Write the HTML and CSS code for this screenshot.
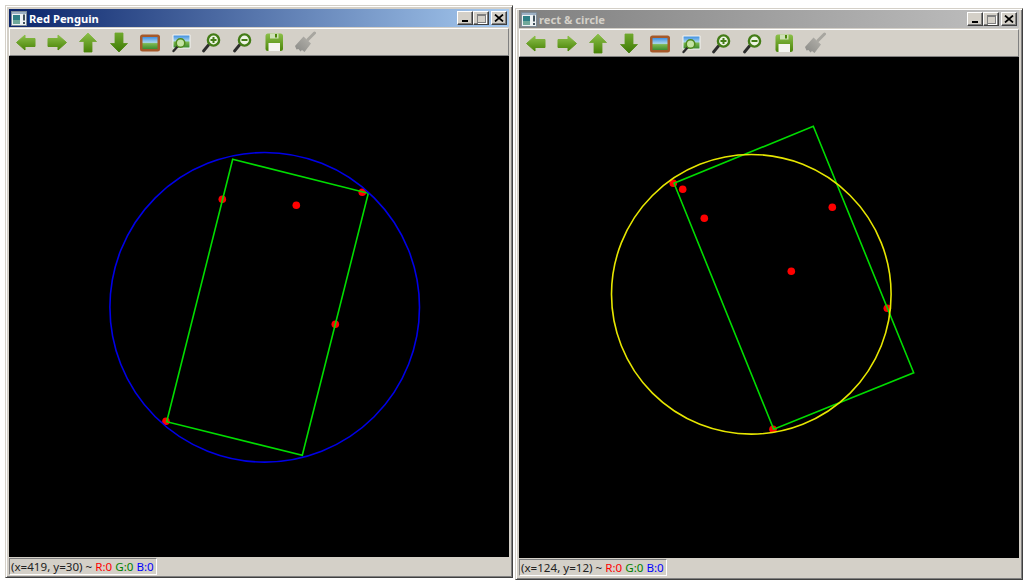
FILE: index.html
```html
<!DOCTYPE html>
<html>
<head>
  <title>Red Penguin</title>
  <link rel="stylesheet" href="styles.css">
</head>
<body>
  <svg class="sprites" width="0" height="0">
    <defs>
      <linearGradient id="greenV" x1="0" y1="0" x2="0" y2="1">
        <stop offset="0" stop-color="#8cc04a"/>
        <stop offset="1" stop-color="#4a8408"/>
      </linearGradient>
      <linearGradient id="greenDown" x1="0" y1="0" x2="0" y2="1">
        <stop offset="0" stop-color="#6fa82c"/>
        <stop offset="1" stop-color="#3f7a06"/>
      </linearGradient>
      <linearGradient id="sky" x1="0" y1="0" x2="0" y2="1">
        <stop offset="0" stop-color="#3f8fe0"/>
        <stop offset="0.45" stop-color="#a8d4ee"/>
        <stop offset="0.55" stop-color="#7cb850"/>
        <stop offset="1" stop-color="#3c8c30"/>
      </linearGradient>
      <linearGradient id="broomGrad" x1="1" y1="0" x2="0" y2="1">
        <stop offset="0" stop-color="#b4b2ac"/>
        <stop offset="1" stop-color="#8a8a86"/>
      </linearGradient>

      <symbol id="ic-left" viewBox="0 0 22 22">
        <path d="M1.5 11.5 L10 4 V7.5 H20 V15.5 H10 V19 Z" fill="url(#greenV)" stroke="url(#greenV)" stroke-linejoin="round"/>
      </symbol>
      <symbol id="ic-right" viewBox="0 0 22 22">
        <path d="M20.5 11.5 L12 4 V7.5 H2 V15.5 H12 V19 Z" fill="url(#greenV)" stroke="url(#greenV)" stroke-linejoin="round"/>
      </symbol>
      <symbol id="ic-up" viewBox="0 0 22 22">
        <path d="M11 2 L19.5 10.5 H15 V21 H7 V10.5 H2.5 Z" fill="url(#greenV)" stroke="url(#greenV)" stroke-width="0.8" stroke-linejoin="round"/>
      </symbol>
      <symbol id="ic-down" viewBox="0 0 22 22">
        <path d="M11 21 L19.5 12.5 H15 V2 H7 V12.5 H2.5 Z" fill="url(#greenDown)" stroke="url(#greenDown)" stroke-width="0.8" stroke-linejoin="round"/>
      </symbol>
      <symbol id="ic-image" viewBox="0 0 22 22">
        <rect x="1" y="3.5" width="20" height="17" rx="2.5" fill="#a5592a"/>
        <rect x="3.5" y="6" width="15" height="12" fill="url(#sky)"/>
      </symbol>
      <symbol id="ic-fit" viewBox="0 0 22 22">
        <rect x="2.5" y="3.5" width="18" height="14" rx="1" fill="#f4f6f4"/>
        <rect x="3.5" y="4.5" width="16" height="12" fill="url(#sky)"/>
        <path d="M3.5 20 L7.5 15.5" stroke="#2c2c2c" stroke-width="2.4" stroke-linecap="round"/>
        <circle cx="10.5" cy="12" r="4.3" fill="#c4e4a4" stroke="#4f8a1c" stroke-width="1.6"/>
      </symbol>
      <symbol id="ic-zoomin" viewBox="0 0 22 22">
        <path d="M2.5 20 L7.5 14" stroke="#2c2c2c" stroke-width="2.8" stroke-linecap="round"/>
        <circle cx="12.5" cy="9" r="5.6" fill="#eef4e4" stroke="#437c16" stroke-width="2.4"/>
        <path d="M9.5 9 H15.5 M12.5 6 V12" stroke="#437c16" stroke-width="2"/>
      </symbol>
      <symbol id="ic-zoomout" viewBox="0 0 22 22">
        <path d="M2.5 20 L7.5 14" stroke="#2c2c2c" stroke-width="2.8" stroke-linecap="round"/>
        <circle cx="12.5" cy="9" r="5.6" fill="#eef4e4" stroke="#437c16" stroke-width="2.4"/>
        <path d="M9.5 9 H15.5" stroke="#437c16" stroke-width="2"/>
      </symbol>
      <symbol id="ic-save" viewBox="0 0 22 22">
        <rect x="2.5" y="2.5" width="17.5" height="17.5" rx="2.5" fill="url(#greenV)"/>
        <rect x="7" y="2.5" width="8.5" height="5" fill="#cfe0b8"/>
        <rect x="12" y="3" width="2" height="3.5" fill="#4a8408"/>
        <rect x="5.5" y="12" width="11.5" height="8" fill="#f4f4f0"/>
      </symbol>
      <symbol id="ic-clear" viewBox="0 0 22 22">
        <path d="M20.5 2 L14 8.5" stroke="#a8a6a0" stroke-width="3" stroke-linecap="round"/>
        <path d="M9.5 5.5 L17 12.5 L10.5 21 L8 19 L6.5 20.5 L4.5 18 L2.5 18.5 L1 15 Z" fill="url(#broomGrad)"/>
      </symbol>
      <symbol id="ic-app" viewBox="0 0 16 15">
        <rect x="0.5" y="0.5" width="15" height="14" fill="#eef2f4" stroke="#7e8c98"/>
        <rect x="1" y="1" width="14" height="2" fill="#9cb0c4"/>
        <rect x="2" y="4" width="7" height="9" fill="#2f7f86"/>
        <rect x="2" y="9" width="7" height="4" fill="#6fa89a"/>
        <rect x="12" y="3.5" width="2" height="6" fill="#40505c"/>
        <rect x="12" y="11" width="2" height="2" fill="#40505c"/>
      </symbol>
      <symbol id="ic-close" viewBox="0 0 10 8">
        <path d="M1 0.5 L9 7.5 M9 0.5 L1 7.5" stroke="#000" stroke-width="1.7"/>
      </symbol>
    </defs>
  </svg>

  <div class="window window-first">
    <div class="titlebar">
      <svg class="app-icon"><use href="#ic-app"/></svg>
      <span class="title">Red Penguin</span>
      <div class="winbuttons">
        <div class="winbtn"><span class="min-glyph"></span></div>
        <div class="winbtn"><span class="max-glyph"></span></div>
        <div class="winbtn close"><svg class="close-glyph"><use href="#ic-close"/></svg></div>
      </div>
    </div>
    <div class="toolbar">
      <div class="tool"><svg><use href="#ic-left"/></svg></div>
      <div class="tool"><svg><use href="#ic-right"/></svg></div>
      <div class="tool"><svg><use href="#ic-up"/></svg></div>
      <div class="tool"><svg><use href="#ic-down"/></svg></div>
      <div class="tool"><svg><use href="#ic-image"/></svg></div>
      <div class="tool"><svg><use href="#ic-fit"/></svg></div>
      <div class="tool"><svg><use href="#ic-zoomin"/></svg></div>
      <div class="tool"><svg><use href="#ic-zoomout"/></svg></div>
      <div class="tool"><svg><use href="#ic-save"/></svg></div>
      <div class="tool"><svg><use href="#ic-clear"/></svg></div>
    </div>
    <svg class="canvas" viewBox="0 0 500 501">
      <g fill="#ff0000">
        <circle cx="213.3" cy="143.3" r="3.8"/>
        <circle cx="287.3" cy="149.3" r="3.8"/>
        <circle cx="353.3" cy="136.3" r="3.8"/>
        <circle cx="326.3" cy="268.3" r="3.8"/>
        <circle cx="157" cy="365.3" r="3.8"/>
      </g>
      <polygon class="rect-line" points="223.7,103.3 359.3,137.3 293.3,399.3 157.7,365.7"/>
      <circle class="blue-line" cx="255.7" cy="251.3" r="154.8"/>
    </svg>
    <div class="statusbar">
      <div class="readout">(x=419, y=30) ~ <span class="r">R:0</span> <span class="g">G:0</span> <span class="b">B:0</span></div>
    </div>
  </div>

  <div class="window window-second">
    <div class="titlebar inactive">
      <svg class="app-icon"><use href="#ic-app"/></svg>
      <span class="title">rect &amp; circle</span>
      <div class="winbuttons">
        <div class="winbtn"><span class="min-glyph"></span></div>
        <div class="winbtn"><span class="max-glyph"></span></div>
        <div class="winbtn close"><svg class="close-glyph"><use href="#ic-close"/></svg></div>
      </div>
    </div>
    <div class="toolbar">
      <div class="tool"><svg><use href="#ic-left"/></svg></div>
      <div class="tool"><svg><use href="#ic-right"/></svg></div>
      <div class="tool"><svg><use href="#ic-up"/></svg></div>
      <div class="tool"><svg><use href="#ic-down"/></svg></div>
      <div class="tool"><svg><use href="#ic-image"/></svg></div>
      <div class="tool"><svg><use href="#ic-fit"/></svg></div>
      <div class="tool"><svg><use href="#ic-zoomin"/></svg></div>
      <div class="tool"><svg><use href="#ic-zoomout"/></svg></div>
      <div class="tool"><svg><use href="#ic-save"/></svg></div>
      <div class="tool"><svg><use href="#ic-clear"/></svg></div>
    </div>
    <svg class="canvas" viewBox="0 0 500 501">
      <g fill="#ff0000">
        <circle cx="154.3" cy="126.3" r="3.8"/>
        <circle cx="163.7" cy="132.3" r="3.8"/>
        <circle cx="185.3" cy="161.3" r="3.8"/>
        <circle cx="313.3" cy="150.3" r="3.8"/>
        <circle cx="272.3" cy="214.3" r="3.8"/>
        <circle cx="368.3" cy="251.3" r="3.8"/>
        <circle cx="254" cy="372.3" r="3.8"/>
      </g>
      <polygon class="rect-line" points="294.3,69.3 394.7,315.7 254.7,372.3 155,126.3"/>
      <circle class="yellow-line" cx="232.3" cy="237.3" r="139.8"/>
    </svg>
    <div class="statusbar">
      <div class="readout">(x=124, y=12) ~ <span class="r">R:0</span> <span class="g">G:0</span> <span class="b">B:0</span></div>
    </div>
  </div>
</body>
</html>
```

FILE: styles.css
```css
html, body {
  height: 100%;
}
body {
  margin: 0;
  background: #fff;
  display: flex;
  align-items: flex-start;
  gap: 2px;
  padding-left: 5px;
  overflow: hidden;
  font-family: "Noto Sans", sans-serif;
}
.sprites {
  position: absolute;
}
.window {
  box-sizing: border-box;
  width: 508px;
  display: flex;
  flex-direction: column;
  background: #d4d0c8;
  padding: 3px 3px 0;
  border: 1px solid;
  border-color: #d4d0c8 #404040 #404040 #d4d0c8;
  box-shadow: inset 1px 1px 0 #fff, inset -1px -1px 0 #808080;
}
.window-first {
  margin-top: 5px;
  height: 573px;
}
.window-second {
  margin-top: 8px;
  height: 572px;
  padding-top: 1px;
}
.titlebar {
  height: 18px;
  display: flex;
  align-items: center;
  padding: 0 2px;
  background: linear-gradient(90deg, #0a246a, #a6caf0);
  color: #fff;
}
.titlebar.inactive {
  background: linear-gradient(90deg, #808080, #c0c0c0);
  color: #d4d0c8;
}
.app-icon {
  width: 16px;
  height: 15px;
  margin-right: 2px;
}
.title {
  font-size: 11.2px;
  font-weight: bold;
  white-space: nowrap;
}
.winbuttons {
  margin-left: auto;
  display: flex;
}
.winbtn {
  box-sizing: border-box;
  width: 16px;
  height: 14px;
  background: #d4d0c8;
  border: 1px solid;
  border-color: #fff #404040 #404040 #fff;
  box-shadow: inset -1px -1px 0 #808080;
  display: flex;
  justify-content: center;
  align-items: center;
}
.winbtn.close {
  margin-left: 2px;
}
.min-glyph {
  width: 6px;
  height: 2px;
  background: #000;
  margin-top: 6px;
  margin-right: 1px;
}
.max-glyph {
  box-sizing: border-box;
  width: 9px;
  height: 9px;
  border: 1px solid #808080;
  border-top-width: 2px;
  box-shadow: 1px 1px 0 #fff;
}
.close-glyph {
  width: 10px;
  height: 8px;
}
.toolbar {
  box-sizing: border-box;
  height: 28px;
  margin-top: 1px;
  display: flex;
  align-items: center;
  border: 1px solid;
  border-color: #fff #808080 #808080 #fff;
}
.tool {
  width: 31px;
  height: 22px;
  display: flex;
  justify-content: center;
}
.tool svg {
  width: 22px;
  height: 22px;
}
.canvas {
  display: block;
  width: 500px;
  height: 501px;
  flex: none;
  background: #000;
}
.canvas polygon, .canvas circle[class] {
  fill: none;
  stroke-width: 1.6;
}
.rect-line {
  stroke: #00dc00;
}
.blue-line {
  stroke: #0000e6;
}
.yellow-line {
  stroke: #e6e600;
}
.statusbar {
  display: flex;
  padding-top: 1px;
}
.readout {
  box-sizing: border-box;
  height: 17px;
  padding: 0 2px 0 1px;
  font-size: 11.6px;
  line-height: 15px;
  color: #222;
  white-space: nowrap;
  border: 1px solid;
  border-color: #808080 #fff #fff #808080;
}
.r { color: #ff0000; }
.g { color: #008000; }
.b { color: #0000ff; }
```
